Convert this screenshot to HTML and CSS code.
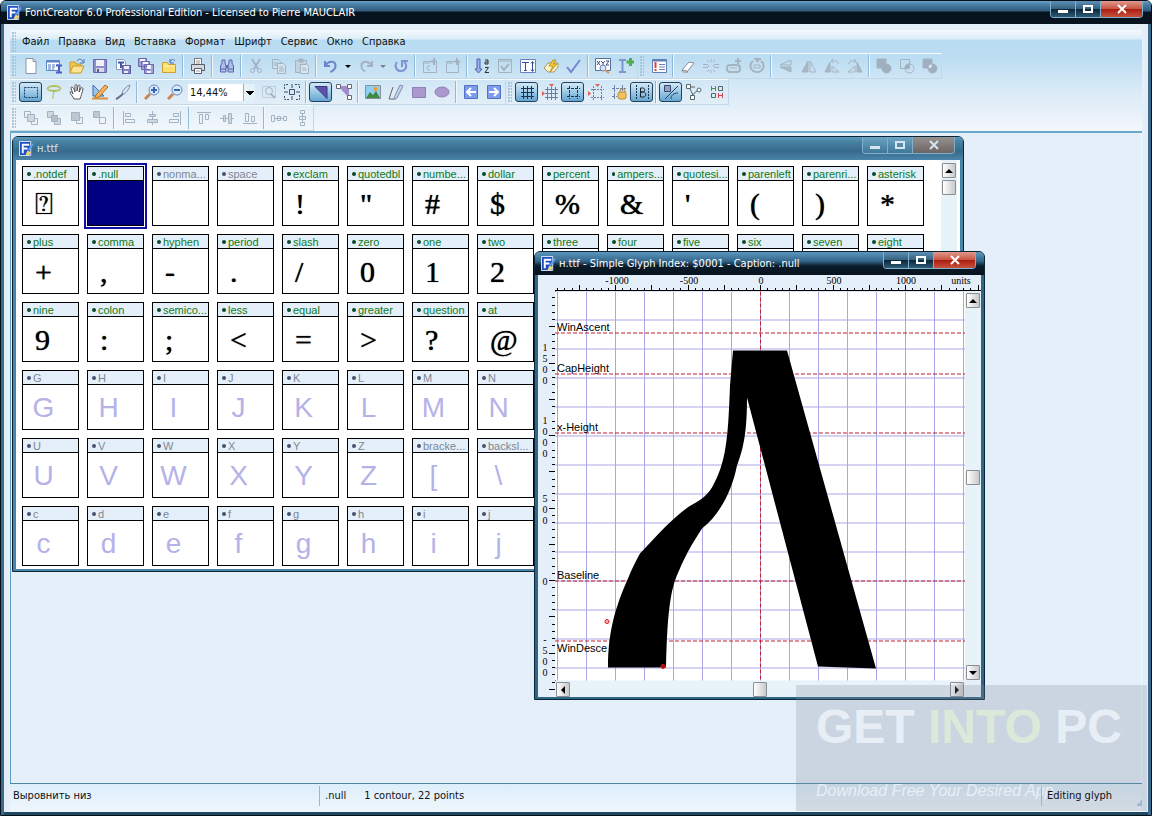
FILE: index.html
```html
<!DOCTYPE html>
<html lang="ru">
<head>
    <meta charset="UTF-8">
    <meta name="viewport" content="width=device-width, initial-scale=1.0">
    <title>FontCreator 6.0 Professional Edition</title>
    <link rel="stylesheet" href="styles.css">
</head>
<body>
    <div class="app">
        <header class="titlebar">
            <svg class="logo"><use href="#logo"/></svg>
            <span class="title">FontCreator 6.0 Professional Edition - Licensed to Pierre MAUCLAIR</span>
            <div class="win-buttons">
                <button title="Minimize"><svg><use href="#min"/></svg></button>
                <button title="Maximize"><svg><use href="#max"/></svg></button>
                <button class="close" title="Close"><svg><use href="#close"/></svg></button>
            </div>
        </header>

        <div class="rebar">
            <nav class="menu">
                <span class="grip"></span>
                <a href="#">Файл</a>
                <a href="#">Правка</a>
                <a href="#">Вид</a>
                <a href="#">Вставка</a>
                <a href="#">Формат</a>
                <a href="#">Шрифт</a>
                <a href="#">Сервис</a>
                <a href="#">Окно</a>
                <a href="#">Справка</a>
            </nav>

            <div class="bar-row">
                <div class="toolbar">
                    <span class="grip"></span>
                    <button title="New"><svg><path d="M3 .5h7l3 3v12H3z" fill="#fff" stroke="#8b93a8"/><path d="M10 .5v3h3" stroke="#8b93a8"/></svg></button>
                    <button title="Font info"><svg><path d="M.5 2.5h13v10H.5z" fill="#fff" stroke="#5f86c4"/><path d="M1 3.500h12" stroke="#5f86c4" stroke-width="2"/><path d="M2 7h3m1 0h3m1 0h3M2 9h3m1 0h3M2 11h3m1 0h2" stroke="#4a78c0"/><path d="M10 7.500h6M10 14.500h6M13 8v6" stroke="#4b5fc0" stroke-width="2"/></svg></button>
                    <button title="Open"><svg><path d="M1 15V4h5l1 2h5v3" fill="#f2c94f" stroke="#c79a2c"/><path d="M1 15l3-7h11l-3 7z" fill="#ffe493" stroke="#c79a2c"/><path d="M8 3c2-3 5-2 6 1m1-3v4h-4" stroke="#4a72b8"/></svg></button>
                    <button title="Save"><svg><path d="M1.500 1.500h13v13h-13z" fill="#8f8ecb" stroke="#6a68aa"/><path d="M4 2h8v6H4z" fill="#f1f1fa"/><path d="M4 10h8v4H4z" fill="#d9d9e6"/><path d="M5 11h2v3H5z" fill="#5d5b9c"/></svg></button>
                    <button title="Save font as"><svg><path d="M1.500 1.500h7l2 2v8h-9z" fill="#fff" stroke="#8c9ac4"/><path d="M3 4.500h6M6 5v5" stroke="#3e58a8" stroke-width="2"/><path d="M7.500 7.500h8v8h-8z" fill="#8583c8" stroke="#5d5b9c"/><path d="M9 8h5v3H9zM9 13h4v2H9z" fill="#eef"/></svg></button>
                    <button title="Save all"><svg><path d="M.5.5h8v8h-8zM3.500 3.500h8v8h-8zM6.500 6.500h9v9h-9z" fill="#a3a0dc" stroke="#6a68aa"/><path d="M2 1h5v2H2zM5 4h5v2H5zM9 7h4v4H9zM9 13h4v2H9z" fill="#f4f4ff"/></svg></button>
                    <button title="Close font"><svg><path d="M1.500 14.500v-10h5l1 2h7v8z" fill="#ffdf6b" stroke="#c9a033"/><path d="M2 8h12" stroke="#fff3b8"/><path d="M9 4c1-3 4-3 5-1M9 1v4h4" stroke="#4a72b8"/></svg></button>
                    <i class="sep"></i>
                    <button title="Print"><svg><path d="M4.500.5h7v6h-7z" fill="#fff" stroke="#777"/><path d="M1.500 6.500h13v6h-13z" fill="#d5d9de" stroke="#555e68"/><path d="M4.500 10.500h7v5h-7z" fill="#fff" stroke="#555e68"/><path d="M6 3h4M6 5h4M6 13h4" stroke="#999"/></svg></button>
                    <i class="sep"></i>
                    <button title="Find"><svg><path d="M3 2h3v3l1 3v6H1.500V8L3 5zM10 2h3v3l1.500 3v6H9V8l1-3z" fill="#b3bdea" stroke="#5767ac"/><path d="M7 7h2v3H7z" fill="#5767ac"/><path d="M2 11h5m2 0h5" stroke="#5767ac"/></svg></button>
                    <i class="sep"></i>
                    <button title="Cut" disabled><svg class="off"><path d="M4 1l6 10M12 1L6 11" stroke-width="2"/><circle cx="4.500" cy="12.500" r="2"/><circle cx="11.500" cy="12.500" r="2"/></svg></button>
                    <button title="Copy" disabled><svg class="off"><path d="M1.500 1.500h6l2 2v7h-8z"/><path d="M6.500 5.500h6l2 2v8h-8z" fill="#d5e3ee"/><path d="M3 5h4M3 7h3M8 9h4M8 11h5M8 13h5"/></svg></button>
                    <button title="Paste" disabled><svg class="off"><path d="M1.500 2.500h11v12h-11z" fill="#c3d2df"/><path d="M5 1h4v3H5z" fill="#a5b5c3"/><path d="M6.500 6.500h6l2 2v7h-8z" fill="#dce8f1"/><path d="M8 10h4M8 12h5"/></svg></button>
                    <i class="sep"></i>
                    <button title="Undo"><svg><path d="M2 3v5h5M2.500 7.500C6 2 13 3 12.500 8c0 3-3 5-5 6" stroke="#6d83cc" stroke-width="2"/></svg></button>
                    <button class="drop" title="Undo list"><svg><use href="#drop"/></svg></button>
                    <button title="Redo" disabled><svg class="off"><path d="M14 3v5H9M13.500 7.500C10 2 3 3 3.500 8c0 3 2 5 4 5" stroke-width="2"/></svg></button>
                    <button class="drop" title="Redo list" disabled><svg class="off"><use href="#drop"/></svg></button>
                    <button title="Repeat"><svg><path d="M4 4C1 8 3 13 8 13c5 0 7-6 3-9M9 9V3h6" stroke="#7d95d2" stroke-width="2"/></svg></button>
                    <i class="sep"></i>
                    <button title="Insert characters" disabled><svg class="off"><path d="M1.500 3.500h13v11h-13zM2 5h6M8 8c-4-1-4 5 0 4"/><path d="M12 0v7M9 3.500h6" stroke-width="2"/></svg></button>
                    <button title="Insert glyphs" disabled><svg class="off"><path d="M1.500 3.500h12v11h-12zM2 5h6"/><path d="M12 0v7M9 3.500h6" stroke-width="2"/></svg></button>
                    <i class="sep"></i>
                    <button title="Sort glyphs"><svg><path d="M3 1h3v10h2l-3.500 4L1 11h2z" fill="#9db1ea" stroke="#4462b4"/><path d="M11 2h3v4h-3V4h3M11 9.500h3.500L11 14.500h4" stroke="#333"/></svg></button>
                    <button title="Validate" disabled><svg class="off"><path d="M1.500 1.500h13v13h-13zM2 3h12" /><path d="M4 8l3 4 5-6" stroke-width="2"/></svg></button>
                    <button title="Metrics"><svg><path d="M.5 1.500h15v13H.5z" fill="#fff" stroke="#6e83b8"/><path d="M2 4.500h7M5.500 5v7M4 12.500h3" stroke="#334f9c"/><path d="M12.500 4v9M11 5.500l1.500-2 1.500 2M11 11.500l1.500 2 1.500-2" stroke="#334f9c"/></svg></button>
                    <button title="Auto naming"><svg><path d="M1 10l4-5h10v4l-4 5H5z" fill="#fff3c8" stroke="#a3936a"/><path d="M10 2L6 8h4l-3 6 7-8h-4l3-4z" fill="#ffd12e" stroke="#b8952a"/></svg></button>
                    <button title="Test"><svg><path d="M1 9l4 5L14 2" stroke="#7388d0" stroke-width="2"/></svg></button>
                    <i class="sep"></i>
                    <button title="Preview"><svg><path d="M.5.5h15v12H.5z" fill="#fff" stroke="#5a6c9c"/><path d="M2 3l3 4m0-4L2 7m4-4l2 2 2-2M8 5v2m3-4h3l-3 4h3" stroke="#3d4f86"/><circle cx="8" cy="10" r="3" fill="#d5e8fa" stroke="#6a7fae"/><path d="M10 12l4 3" stroke="#d8935b" stroke-width="2"/></svg></button>
                    <button title="Add glyph"><svg><path d="M1 2h7M1 14h7M4.500 3v11" stroke="#7d95d0" stroke-width="2"/><path d="M12.500 0v8M8.500 4h8" stroke="#4fae4b" stroke-width="3"/></svg></button>
                </div>
                <div class="toolbar">
                    <span class="grip"></span>
                    <button title="Properties"><svg><path d="M1.500 1.500h14v13h-14z" fill="#fff" stroke="#5f7fb8"/><path d="M2 2.500h13" stroke="#5f7fb8" stroke-width="2"/><path d="M4.500 4v6M4.500 11v2" stroke="#e04040" stroke-width="2"/><path d="M8 6.500h6M8 9h6M8 11.500h6" stroke="#6e83b8"/></svg></button>
                    <i class="sep"></i>
                    <button title="Eraser"><svg><path d="M2 12l7-8 5 1-7 9H3z" fill="#fff" stroke="#8b8b98"/><path d="M2 12l5 1v2" stroke="#8b8b98"/></svg></button>
                    <button title="Break" disabled><svg class="off"><path d="M0 6.500h4c2 0 2 3 0 3H0M16 6.500h-4c-2 0-2 3 0 3h4M8 1v3M8 12v3M4 2l2 2M12 2l-2 2M4 14l2-2M12 14l-2-2"/></svg></button>
                    <button title="Join" disabled><svg class="off"><rect x="1" y="7" width="13" height="7" rx="3" stroke-width="2"/><path d="M4 10h7" /><path d="M12 0v6M9 3h6" stroke-width="2"/></svg></button>
                    <button title="Direction" disabled><svg class="off"><path d="M4 3C-1 7 2 14 8 14s9-7 4-11M8 4V1H5M9 4V1h3" stroke-width="2"/><path d="M5 7h6v3H5z"/></svg></button>
                    <i class="sep"></i>
                    <button title="Flip vertical" disabled><svg class="off"><path d="M13 2v5H2z"/><path d="M13 14V9H2z" fill="#a9b8c5"/></svg></button>
                    <button title="Flip horizontal" disabled><svg class="off"><path d="M1 14h6V3z" fill="#a9b8c5"/><path d="M15 14H9V3z"/></svg></button>
                    <button title="Rotate left" disabled><svg class="off"><path d="M1 14h5V4z" fill="#a9b8c5"/><path d="M8 14h7L8 8zM7 3h4c2 0 3 1 3 3M9 1L7 3l2 2"/></svg></button>
                    <button title="Rotate right" disabled><svg class="off"><path d="M15 14h-5V4z" fill="#a9b8c5"/><path d="M8 14H1l7-6zM9 3H5C3 3 2 4 2 6M7 1l2 2-2 2"/></svg></button>
                    <i class="sep"></i>
                    <button title="Union" disabled><svg class="off"><path d="M1 1h9v9H1z" fill="#9fafbe"/><circle cx="10.500" cy="10.500" r="4.500" fill="#9fafbe"/></svg></button>
                    <button title="Intersection" disabled><svg class="off"><path d="M1.500 1.500h9v9h-9z"/><circle cx="10.500" cy="10.500" r="4.500"/><path d="M6 10c0-3 2-4 4-4v4z" fill="#9fafbe"/></svg></button>
                    <button title="Exclusion" disabled><svg class="off"><path d="M1 1h9v9H1z" fill="#9fafbe"/><circle cx="10.500" cy="10.500" r="4.500" fill="#9fafbe"/><path d="M6 10c0-3 2-4 4-4v4z" fill="#eaf3fa"/></svg></button>
                </div>
            </div>

            <div class="bar-row">
                <div class="toolbar">
                    <span class="grip"></span>
                    <button class="on" title="Select"><svg><path d="M1.500 3.500h13v10h-13z" stroke="#1d3f66" stroke-dasharray="2 1"/></svg></button>
                    <button title="Lasso"><svg><ellipse cx="8" cy="4.500" rx="7" ry="3" stroke="#b3c25a"/><ellipse cx="8" cy="4.500" rx="6" ry="2" stroke="#a9b84e"/><path d="M6 6c4 2 0 4 1 9" stroke="#a9b84e"/></svg></button>
                    <button title="Pan"><svg><path d="M5 15c-1-3-4-5-4-7 1-1 2 0 3 2L2 4c0-2 2-1 3 1l1 3V2c0-2 2-2 2 0v5l1-5c1-2 2-1 2 1l-1 5 2-4c1-1 2 0 2 1-1 4-2 7-3 10z" fill="#fff" stroke="#555"/></svg></button>
                    <button title="Measure"><svg><path d="M1 1v11h11z" fill="#9cc3ee" stroke="#3f6fae"/><path d="M4 11L13 1l3 2-9 10-4 1z" fill="#f5b458" stroke="#b56a26"/><path d="M0 14.500h16" stroke="#d8913a" stroke-width="2"/></svg></button>
                    <button title="Knife"><svg><path d="M15 1c-3 1-7 4-8 8l2 1c3-2 5-5 6-9z" fill="#dce6f2" stroke="#7f90ad"/><path d="M8 10c-2 1-4 4-7 5" stroke="#6e6e90" stroke-width="2"/></svg></button>
                    <i class="sep"></i>
                    <button title="Zoom in"><svg><path d="M6 10l-5 5" stroke="#c98555" stroke-width="3"/><circle cx="10" cy="6" r="5" fill="#d6ebff" stroke="#6b85b8"/><path d="M10 3v6M7 6h6" stroke="#3465b0" stroke-width="2"/></svg></button>
                    <button title="Zoom out"><svg><path d="M6 10l-5 5" stroke="#c98555" stroke-width="3"/><circle cx="10" cy="6" r="5" fill="#d6ebff" stroke="#6b85b8"/><path d="M7 6h6" stroke="#3465b0" stroke-width="2"/></svg></button>
                    <select class="zoom" aria-label="Zoom"><option>14,44%</option></select>
                    <button title="Zoom selection" disabled><svg class="off"><path d="M1.500 2.500h13v11h-13z" stroke-dasharray="1 1"/><circle cx="8" cy="7" r="3.500"/><path d="M10 10l4 4" stroke-width="2"/></svg></button>
                    <button title="Fit"><svg><path d="M.5 5V.5H5M11 .5h4.500V5M15.500 11v4.500H11M5 15.500H.5V11" stroke="#3c5068" stroke-dasharray="2 1"/><path d="M5.500 5.500h5v5h-5zM8 0v4M8 12v4M0 8h4M12 8h4" stroke="#3c5068"/></svg></button>
                    <i class="sep"></i>
                    <button class="on" title="Fill outline"><svg><path d="M2 2.500h12v12z" fill="#5d52a8" stroke="#3b3a80"/></svg></button>
                    <button title="Show points"><svg><path d="M2 2h11v12z" fill="#a08cc8"/><path d="M.5.5h4v4h-4zM11.500.5h4v4h-4zM11.500 11.500h4v4h-4z" fill="#fff" stroke="#667"/></svg></button>
                    <i class="sep"></i>
                    <button title="Background image"><svg><path d="M.5 1.500h15v13H.5z" fill="#8fd0f2" stroke="#8a8f98"/><path d="M1 14l4-6 3 3 3-4 4 7z" fill="#3f8a3f"/><circle cx="10.500" cy="5" r="2" fill="#f59b2c"/></svg></button>
                    <button title="Draw contour"><svg><path d="M1 15L5 3M1 15h5" stroke="#666"/><path d="M6 14L12 1l3 1-6 12-3 2z" fill="#c2d2ea" stroke="#7f8fb2"/></svg></button>
                    <button title="Rectangle"><svg><path d="M1.500 3.500h13v10h-13z" fill="#ab98cc" stroke="#927fb6"/></svg></button>
                    <button title="Ellipse"><svg><ellipse cx="8" cy="8" rx="7" ry="5" fill="#ab98cc" stroke="#927fb6"/></svg></button>
                    <i class="sep"></i>
                    <button title="Previous glyph"><svg><path d="M1.500 1.500h13v13h-13z" fill="#7c9cec" stroke="#5570c4"/><path d="M13 8H4M8 4L4 8l4 4" stroke="#fff" stroke-width="2"/></svg></button>
                    <button title="Next glyph"><svg><path d="M1.500 1.500h13v13h-13z" fill="#7c9cec" stroke="#5570c4"/><path d="M3 8h9M8 4l4 4-4 4" stroke="#fff" stroke-width="2"/></svg></button>
                </div>
                <div class="toolbar">
                    <span class="grip"></span>
                    <button class="on" title="Grid"><svg><path d="M4.500 2v13M8.500 2v13M12.500 2v13M2 4.500h13M2 8.500h13M2 12.500h13" stroke="#1b3550"/></svg></button>
                    <button title="Snap to grid"><svg><path d="M5.500 3v13M9.500 3v13M13.500 3v13M3 5.500h13M3 9.500h13M3 13.500h13" stroke="#6d7ea8"/><path d="M7 0h5L9.500 3zM0 7v5l3-2.500z" fill="#e0605a"/></svg></button>
                    <button class="on" title="Guidelines"><svg><path d="M4.500 2v13M12.500 2v13M2 4.500h13M2 12.500h13" stroke="#1b3550" stroke-dasharray="3 1"/></svg></button>
                    <button title="Snap to guidelines"><svg><path d="M5.500 2v14M13.500 2v14M3 5.500h13M3 13.500h13" stroke="#6d7ea8" stroke-dasharray="2 1"/><path d="M7 0h5L9.500 3zM0 7v5l3-2.500z" fill="#e0605a"/></svg></button>
                    <button title="Lock guidelines"><svg><path d="M3.500 1v14M11.500 1v6M1 4.500h14M1 12.500h5" stroke="#6d7ea8" stroke-dasharray="3 1"/><path d="M9 9V7c0-3 5-3 5 0v2" stroke="#a88434"/><rect x="7" y="8" width="8" height="7" rx="2" fill="#f3c45c" stroke="#b88a2e"/></svg></button>
                    <button class="on" title="Bearings"><svg><path d="M2.500 1v15M14.500 1v15" stroke="#1b3550" stroke-dasharray="2 1"/><path d="M6.500 4v9h3c3 0 3-5 0-5h-3 2c3 0 3-4 0-4z" stroke="#15202c"/></svg></button>
                    <i class="sep"></i>
                    <button class="on" title="Contour mode"><svg><path d="M1.500 1.500h6v6h-6z" fill="#9a9cc4" stroke="#334a68"/><path d="M2 15L15 2M8 15c0-4 3-6 7-6" stroke="#24405e"/></svg></button>
                    <button title="Point mode"><svg><path d="M3 3l4 8M6 11l5-4M4 3h5" stroke="#566"/><path d="M.5.5h4v4h-4zM4.500 11.500h4v4h-4z" fill="#fff" stroke="#566"/><circle cx="13" cy="6" r="2" fill="#fff" stroke="#566"/></svg></button>
                    <button title="Kerning"><svg><path d="M2.500 2v5M6.500 2v5M3 4.500h4" stroke="#3d9a4c"/><path d="M9.500 2.500h4v4h-4zM2.500 9.500h4v4h-4z" stroke="#566"/><path d="M9.500 9v5M13.500 9v5M10 11.500h4" stroke="#cc4650"/></svg></button>
                </div>
            </div>

            <div class="bar-row">
                <div class="toolbar">
                    <span class="grip"></span>
                    <button title="Bring to front" disabled><svg class="off"><path d="M1.500 1.500h6v6h-6zM8.500 8.500h6v6h-6z"/><path d="M4.500 4.500h7v7h-7z" fill="#cfd8e0"/></svg></button>
                    <button title="Bring forward" disabled><svg class="off"><path d="M8.500 8.500h6v6h-6zM1.500 1.500h6v6h-6z" fill="#cfd8e0"/><path d="M5.500 5.500h6v6h-6z" fill="#b4c0cb"/></svg></button>
                    <button title="Send backward" disabled><svg class="off"><path d="M7.500 7.500h6v6h-6z"/><path d="M2.500 2.500h8v8h-8z" fill="#bcc7d1"/></svg></button>
                    <button title="Send to back" disabled><svg class="off"><path d="M1.500 1.500h6v6h-6z" fill="#bcc7d1"/><path d="M7.500 7.500h6v6h-6z" fill="#eef4f9"/></svg></button>
                    <i class="sep"></i>
                    <button title="Align left" disabled><svg class="off"><path d="M2.500 1v14M4.500 3.500h5v3h-5zM4.500 9.500h9v3h-9z"/></svg></button>
                    <button title="Center" disabled><svg class="off"><path d="M8.500 1v14"/><path d="M5.500 4.500h6v2h-6zM3.500 9.500h10v3h-10z" fill="#cfd8e0"/></svg></button>
                    <button title="Align right" disabled><svg class="off"><path d="M13.500 1v14M6.500 3.500h5v3h-5zM2.500 9.500h9v3h-9z"/></svg></button>
                    <i class="sep"></i>
                    <button title="Align top" disabled><svg class="off"><path d="M1 2.500h14M3.500 4.500h3v9h-3zM9.500 4.500h3v5h-3z"/></svg></button>
                    <button title="Middle" disabled><svg class="off"><path d="M1 8.500h14"/><path d="M4.500 5.500h2v6h-2zM9.500 3.500h3v10h-3z" fill="#cfd8e0"/></svg></button>
                    <button title="Align bottom" disabled><svg class="off"><path d="M1 13.500h14M3.500 3.500h3v8h-3zM9.500 6.500h3v5h-3z"/></svg></button>
                    <i class="sep"></i>
                    <button title="Space across" disabled><svg class="off"><path d="M.5 5.500h3v6h-3zM6.500 6.500h3v4h-3zM12.500 6.500h3v4h-3zM4 8.500h9"/></svg></button>
                    <button title="Space down" disabled><svg class="off"><path d="M6.500.5h4v3h-4zM5.500 6.500h6v3h-6zM6.500 12.500h4v3h-4zM8.500 4v8"/></svg></button>
                </div>
            </div>
        </div>

        <main class="desktop">
            <section class="window overview">
                <header class="titlebar">
                    <svg class="logo"><use href="#logo"/></svg>
                    <span class="title">н.ttf</span>
                    <div class="win-buttons">
                        <button title="Minimize"><svg><use href="#min"/></svg></button>
                        <button title="Maximize"><svg><use href="#max"/></svg></button>
                        <button class="close" title="Close"><svg><use href="#close"/></svg></button>
                    </div>
                </header>
                <div class="overview-body">
                    <div class="glyphs" id="glyphs"></div>
                    <div class="vscroll">
                        <button title="Up"><svg><path d="M2 9h8L6 5z" fill="#000"/></svg></button>
                        <span class="thumb"></span>
                    </div>
                </div>
            </section>

            <section class="window active editor">
                <header class="titlebar">
                    <svg class="logo"><use href="#logo"/></svg>
                    <span class="title">н.ttf - Simple Glyph Index: $0001 - Caption: .null</span>
                    <div class="win-buttons">
                        <button title="Minimize"><svg><use href="#min"/></svg></button>
                        <button title="Maximize"><svg><use href="#max"/></svg></button>
                        <button class="close" title="Close"><svg><use href="#close"/></svg></button>
                    </div>
                </header>
                <div class="editor-body">
                    <svg class="ruler-top" id="rulerTop"></svg>
                    <svg class="ruler-left" id="rulerLeft"></svg>
                    <svg class="canvas" viewBox="-205 -289 410 389">
                        <defs>
                            <pattern id="grid" width="29" height="29" patternUnits="userSpaceOnUse">
                                <path d="M.5 0V29M0 .5H29" stroke="#a9a6e6"/>
                            </pattern>
                        </defs>
                        <rect x="-205" y="-289" width="410" height="389" fill="#fff"/>
                        <rect x="-205" y="-289" width="410" height="389" fill="url(#grid)"/>
                        <g stroke="#c02030" stroke-dasharray="4 2">
                            <path d="M-205 -247.500H205M-205 -206.500H205M-205 -147.500H205M-205 .5H205M-205 60.500H205"/>
                            <path d="M.5 -289V100"/>
                        </g>
                        <g class="guide-names">
                            <text x="-203" y="-250">WinAscent</text>
                            <text x="-203" y="-209">CapHeight</text>
                            <text x="-203" y="-150">x-Height</text>
                            <text x="-203" y="-2">Baseline</text>
                            <text x="-203" y="71">WinDesce</text>
                        </g>
                        <path d="M-27 -230H27L116 88L58 86L-13 -183C-13 -150 -16 -133 -23 -115C-28 -90 -40 -66 -58 -52C-74 -28 -80 -12 -85 0C-91 18 -93 45 -94 87H-152C-152 50 -144 25 -132 -2C-128 -12 -124 -20 -120 -27C-100 -48 -88 -62 -71 -74C-60 -80 -54 -84 -48 -93C-34 -118 -32 -140 -30 -195Z"/>
                        <circle cx="-153" cy="41" r="2" fill="#f6b0b0" stroke="#e01818"/>
                        <circle cx="-97" cy="86" r="2" fill="#a01010" stroke="#e01818"/>
                    </svg>
                    <div class="vscroll">
                        <button title="Up"><svg><path d="M2 9h8L6 5z" fill="#000"/></svg></button>
                        <span class="thumb"></span>
                        <button title="Down"><svg><path d="M2 5h8L6 9z" fill="#000"/></svg></button>
                    </div>
                    <div class="hscroll">
                        <button title="Left"><svg><path d="M8 3v8L4 7z" fill="#000"/></svg></button>
                        <span class="thumb"></span>
                        <button title="Right"><svg><path d="M4 3v8l4-4z" fill="#000"/></svg></button>
                    </div>
                </div>
            </section>
        </main>

        <footer class="status">
            <span class="hint">Выровнить низ</span>
            <span class="info"><span>.null</span><span>1 contour, 22 points</span></span>
            <span class="mode">Editing glyph</span>
        </footer>

        <div class="watermark">
            <strong>GET <span>INTO</span> PC</strong>
            <em>Download Free Your Desired App</em>
        </div>
    </div>

    <svg class="defs">
        <symbol id="logo" viewBox="0 0 16 16">
            <path d="M.5.5h12v15H.5z" fill="#1c4fc4" stroke="#dce9fb"/>
            <path d="M4 13V4h7M4 8h5" fill="none" stroke="#fff" stroke-width="2"/>
            <path d="M15 3l-5 7" stroke="#5fa0ee" stroke-width="2"/>
            <path d="M9 10l4 2-2 3H7z" fill="#f0d27a"/>
        </symbol>
        <symbol id="min" viewBox="0 0 12 12"><path d="M1 7h10v3H1z" fill="currentColor"/></symbol>
        <symbol id="max" viewBox="0 0 12 12"><path d="M2 3h8v6H2z" fill="none" stroke="currentColor" stroke-width="2"/></symbol>
        <symbol id="close" viewBox="0 0 12 12"><path d="M2 2l8 8M10 2l-8 8" stroke="currentColor" stroke-width="2"/></symbol>
        <symbol id="drop" viewBox="0 0 16 16"><path d="M5 7h6l-3 3z" fill="#000" stroke="none"/></symbol>
    </svg>

    <script src="script.js"></script>
</body>
</html>
```
FILE: styles.css
```css
* {
    box-sizing: border-box;
}

body {
    margin: 0;
    font-family: "DejaVu Sans Condensed", Tahoma, sans-serif;
    font-size: 11px;
    color: #111;
}

button {
    padding: 0;
    border: none;
    background: none;
    color: inherit;
}

.defs {
    position: absolute;
    width: 0;
    height: 0;
}

.app {
    position: relative;
    display: flex;
    flex-direction: column;
    min-height: 100vh;
    background: #e5effa;
    border: 1px solid #03101c;
    border-radius: 6px 6px 0 0;
    box-shadow: inset 3px 0 #3a6a8c, inset -3px 0 #3a6a8c, inset 0 -3px #1d4a60;
}

/* title bars */
.titlebar {
    display: flex;
    flex: none;
    align-items: center;
    height: 23px;
    padding: 0 8px 0 6px;
    border-radius: 5px 5px 0 0;
    background: linear-gradient(#6fa3c6 0, #4a83ad 3px, #31597c 10px, #07131e 11px, #07131e 100%);
    color: #fff;
}

.titlebar .title {
    flex: 1;
    padding-left: 3px;
    white-space: nowrap;
}

.logo {
    width: 15px;
    height: 15px;
}

.win-buttons {
    display: flex;
    align-self: flex-start;
    height: 17px;
    border: 1px solid #7fb0cc;
    border-top: none;
    border-radius: 0 0 4px 4px;
    overflow: hidden;
}

.win-buttons button {
    display: flex;
    align-items: center;
    justify-content: center;
    width: 25px;
    border-right: 1px solid #7fb0cc;
    background: linear-gradient(#5e8fb4, #35607f 50%, #0d2436 50%, #2e5c78);
}

.win-buttons .close {
    width: 41px;
    border-right: none;
    background: linear-gradient(#e09a8c, #c9523f 50%, #a81c10 50%, #c8503c);
}

.win-buttons svg {
    width: 12px;
    height: 12px;
}

/* menu and toolbars */
.rebar {
    margin: 6px 9px 0;
    border-bottom: 2px solid #6aa7cc;
    background: linear-gradient(#f4f9fd 0, #dcedf8 9px, #b9dcf2 10px, #bcddf2 28px, #d9eaf6 60px, #f3f7fc 100%);
}

.menu {
    display: flex;
    align-items: center;
    height: 23px;
}

.menu a {
    padding: 0 4px 0 5px;
    color: #111;
    text-decoration: none;
}

.bar-row {
    display: flex;
    height: 26px;
}

.toolbar {
    display: flex;
    align-items: center;
    height: 26px;
    border: 1px solid #c3d8e6;
    border-top-color: #f6fbfe;
    border-left: none;
}

.grip {
    width: 4px;
    height: 20px;
    margin: 0 3px 0 2px;
    background: radial-gradient(circle at 1px 1px, #a3c4da 1px, transparent 1px) 0 0 / 3px 3px;
}

.menu .grip {
    margin-right: 1px;
}

.toolbar button {
    display: flex;
    align-items: center;
    justify-content: center;
    width: 23px;
    height: 20px;
}

.toolbar .drop {
    width: 12px;
}

.toolbar .on {
    border: 1px solid #23415c;
    border-radius: 3px;
    background: linear-gradient(#d3e8f6, #9cc9e6 50%, #64a5d0);
}

.toolbar svg {
    flex: none;
    width: 16px;
    height: 16px;
    fill: none;
}

.toolbar .off {
    stroke: #a3b3c1;
}

.toolbar .drop .off {
    opacity: 0.4;
}

.sep {
    width: 2px;
    height: 22px;
    margin: 0 2px;
    border-left: 1px solid #8dbad8;
    border-right: 1px solid #f2f9fd;
}

.zoom {
    appearance: none;
    width: 67px;
    height: 17px;
    margin: 0 2px;
    padding: 0 2px;
    border: none;
    border-radius: 0;
    font: inherit;
    font-size: 11px;
    color: #111;
    background:
        linear-gradient(to top right, transparent 50%, #000 50%) 58px 7px / 4px 4px no-repeat,
        linear-gradient(to top left, transparent 50%, #000 50%) 62px 7px / 4px 4px no-repeat,
        linear-gradient(90deg, #fff 55px, #8fb4cc 55px, #8fb4cc 56px, #e6f2fa 56px);
}

/* desktop */
.desktop {
    position: relative;
    flex: 1;
    margin: 0 9px;
    border-left: 1px solid #5f9cc4;
    border-right: 1px solid #f8f6f8;
}

.window {
    position: absolute;
    display: flex;
    flex-direction: column;
    border: 1px solid #0b2536;
    border-radius: 6px 6px 0 0;
    box-shadow: inset 0 0 0 3px #4a84a8;
}

.window .titlebar {
    background: linear-gradient(#5c9ac0 0, #47809f 5px, #376a8c 14px, #4a84a8 100%);
    color: #d5e6f2;
}

.window.active .titlebar {
    background: linear-gradient(#5a97be 0, #36678c 9px, #0b1c2a 14px, #07131e 100%);
    color: #fff;
}

.overview {
    left: 1px;
    top: 3px;
    width: 952px;
    height: 436px;
}

.overview .close {
    background: linear-gradient(#96918f, #6b6462);
}

.overview .win-buttons button:not(.close) {
    background: linear-gradient(#6da3c4, #3f7797);
}

.overview-body {
    display: flex;
    flex: 1;
    margin: 0 3px 3px;
    background: #fff;
}

.glyphs {
    flex: 1;
    display: flex;
    flex-direction: column;
    gap: 8px;
    padding: 6px 6px 3px;
}

.glyph-row {
    display: flex;
    gap: 8px;
}

.glyph {
    width: 57px;
    height: 60px;
    border: 1px solid #000;
    background: #fff;
    font-family: "Liberation Sans", Arial, sans-serif;
}

.glyph .name {
    display: flex;
    align-items: center;
    gap: 2px;
    height: 14px;
    padding-left: 4px;
    border-bottom: 1px solid #000;
    background: #e5effa;
    color: #0c7a18;
    white-space: nowrap;
}

.glyph .name::before {
    content: "";
    width: 4px;
    height: 4px;
    border-radius: 2px;
    background: #0a4a2a;
}

.glyph .shape {
    height: 44px;
    padding-left: 12px;
    font: 30px/46px "Liberation Serif", serif;
    color: #000;
    text-shadow: 0 0 1px #000;
}

.glyph.empty .name {
    color: #7d8794;
}

.glyph.empty .name::before {
    background: #46506c;
}

.glyph.empty .shape {
    padding: 0 14px 0 0;
    font: 28px/46px "Liberation Sans", Arial, sans-serif;
    text-align: center;
    text-shadow: none;
    color: #b5b2e8;
}

.glyph.selected {
    outline: 2px solid #1010a8;
    outline-offset: 1px;
    background: #000080;
}

.vscroll,
.hscroll {
    display: flex;
    justify-content: space-between;
    background: #e8f3f9;
}

.vscroll {
    flex-direction: column;
    align-items: center;
    width: 16px;
}

.vscroll button,
.hscroll button,
.thumb {
    width: 14px;
    height: 15px;
    border: 1px solid #8a8f96;
    border-radius: 1px;
    background: linear-gradient(90deg, #fff, #c9c9cc);
}

.vscroll svg,
.hscroll svg {
    display: block;
    width: 12px;
    height: 13px;
}

.overview .vscroll {
    justify-content: flex-start;
    gap: 2px;
    margin-right: 3px;
    padding-top: 3px;
}

.editor {
    left: 523px;
    top: 118px;
    width: 451px;
    height: 449px;
    box-shadow: inset 0 0 0 3px #2f6786;
}

.editor-body {
    flex: 1;
    display: grid;
    grid-template-columns: 17px 1fr 16px;
    grid-template-rows: 16px 1fr 16px;
    margin: 0 3px 2px;
    background: #e5effa;
}

.editor .vscroll {
    justify-content: flex-start;
    padding: 2px 0 1px;
}

.editor .vscroll .thumb {
    margin: 162px 0 auto;
}

.ruler-top {
    grid-column: 1 / 4;
    width: 100%;
    height: 16px;
}

.ruler-left {
    grid-row: 2 / 4;
    width: 18px;
    height: 100%;
}

.editor-body svg text {
    font: 10px "Liberation Serif", serif;
}

.editor-body .guide-names text {
    font: 11px "Liberation Sans", Arial, sans-serif;
}

.canvas {
    width: 100%;
    height: 100%;
}

.hscroll {
    grid-column: 2;
    align-items: center;
    padding: 0 1px;
}

/* status bar */
.status {
    display: flex;
    align-items: center;
    height: 29px;
    margin: 0 9px 3px;
    padding-bottom: 5px;
    border-top: 1px solid #4c86a4;
    background: linear-gradient(#dceffb, #f0f6fc);
}

.status .hint {
    width: 309px;
    padding-left: 3px;
}

.status .info {
    display: flex;
    flex: 1;
    gap: 18px;
}

.status .info,
.status .mode {
    height: 20px;
    padding-left: 5px;
    border-left: 1px solid #8dbad8;
    line-height: 20px;
}

/* the size grip sits in the corner of the last panel */
.status .mode {
    position: relative;
    z-index: 1;
    width: 101px;
    background: linear-gradient(135deg, transparent 50%, #9bb8cc 50%) right bottom / 6px 6px no-repeat;
}

.watermark {
    position: absolute;
    right: 4px;
    bottom: 4px;
    width: 351px;
    height: 126px;
    padding: 14px 20px 11px;
    display: flex;
    flex-direction: column;
    justify-content: space-between;
    background: rgba(128, 134, 150, 0.25);
    font-family: "Liberation Sans", Arial, sans-serif;
    white-space: nowrap;
    color: rgba(240, 246, 252, 0.8);
    pointer-events: none;
}

.watermark strong {
    font-size: 48px;
    line-height: 56px;
}

.watermark strong span {
    color: #dbe8da;
}

.watermark em {
    font-size: 16px;
    line-height: 18px;
}
```
FILE: script.js
```js
// [caption, character, state]
var rows = [
    [['.notdef', '⍰'], ['.null', '', 'selected'], ['nonma...', '', 'empty'], ['space', '', 'empty'], ['exclam', '!'], ['quotedbl', '"'], ['numbe...', '#'], ['dollar', '$'], ['percent', '%'], ['ampers...', '&'], ['quotesi...', "'"], ['parenleft', '('], ['parenri...', ')'], ['asterisk', '*']],
    [['plus', '+'], ['comma', ','], ['hyphen', '-'], ['period', '.'], ['slash', '/'], ['zero', '0'], ['one', '1'], ['two', '2'], ['three', ''], ['four', ''], ['five', ''], ['six', ''], ['seven', ''], ['eight', '']],
    [['nine', '9'], ['colon', ':'], ['semico...', ';'], ['less', '<'], ['equal', '='], ['greater', '>'], ['question', '?'], ['at', '@']],
    letters('GHIJKLMN'),
    letters('UVWXYZ').concat([['bracke...', '[', 'empty'], ['backsl...', '\\', 'empty']]),
    letters('cdefghij')
];

function letters(text) {
    return text.split('').map(function (c) { return [c, c, 'empty']; });
}

rows.forEach(function (row) {
    var line = document.createElement('div');
    line.className = 'glyph-row';
    row.forEach(function (g) {
        var cell = document.createElement('div');
        cell.className = 'glyph ' + (g[2] || '');
        var name = document.createElement('div');
        name.className = 'name';
        name.textContent = g[0];
        var shape = document.createElement('div');
        shape.className = 'shape';
        shape.textContent = g[1];
        cell.append(name, shape);
        line.append(cell);
    });
    document.getElementById('glyphs').append(line);
});

// rulers: 50 units per tick, 250 units per long tick
var ticksTop = '', ticksLeft = '', i, p;
for (i = -28; i <= 30; i++) {
    p = Math.round(222 + i * 7.25) + 0.5;
    ticksTop += 'M' + p + ' 16v-' + (i % 5 ? 3 : 6);
}
for (i = -39; i <= 15; i++) {
    p = Math.round(289 + i * 7.25) + 0.5;
    ticksLeft += 'M17 ' + p + 'h-' + (i % 5 ? 3 : 6);
}

var html = '<path d="M17 15.5H443' + ticksTop + '" stroke="#000"/>';
[['-1000', 79], ['-500', 151], ['0', 223], ['500', 296], ['1000', 368], ['units', 423]].forEach(function (t) {
    html += '<text x="' + t[1] + '" y="9" text-anchor="middle">' + t[0] + '</text>';
});
document.getElementById('rulerTop').innerHTML = html;

html = '<path d="M17.5 0V406' + ticksLeft + '" stroke="#000"/>';
[['1500', 60], ['1000', 133], ['500', 211], ['0', 294], ['-500', 352]].forEach(function (t) {
    t[0].split('').forEach(function (c, n) {
        html += '<text x="7" y="' + (t[1] + n * 11) + '" text-anchor="middle">' + c + '</text>';
    });
});
document.getElementById('rulerLeft').innerHTML = html;
```
